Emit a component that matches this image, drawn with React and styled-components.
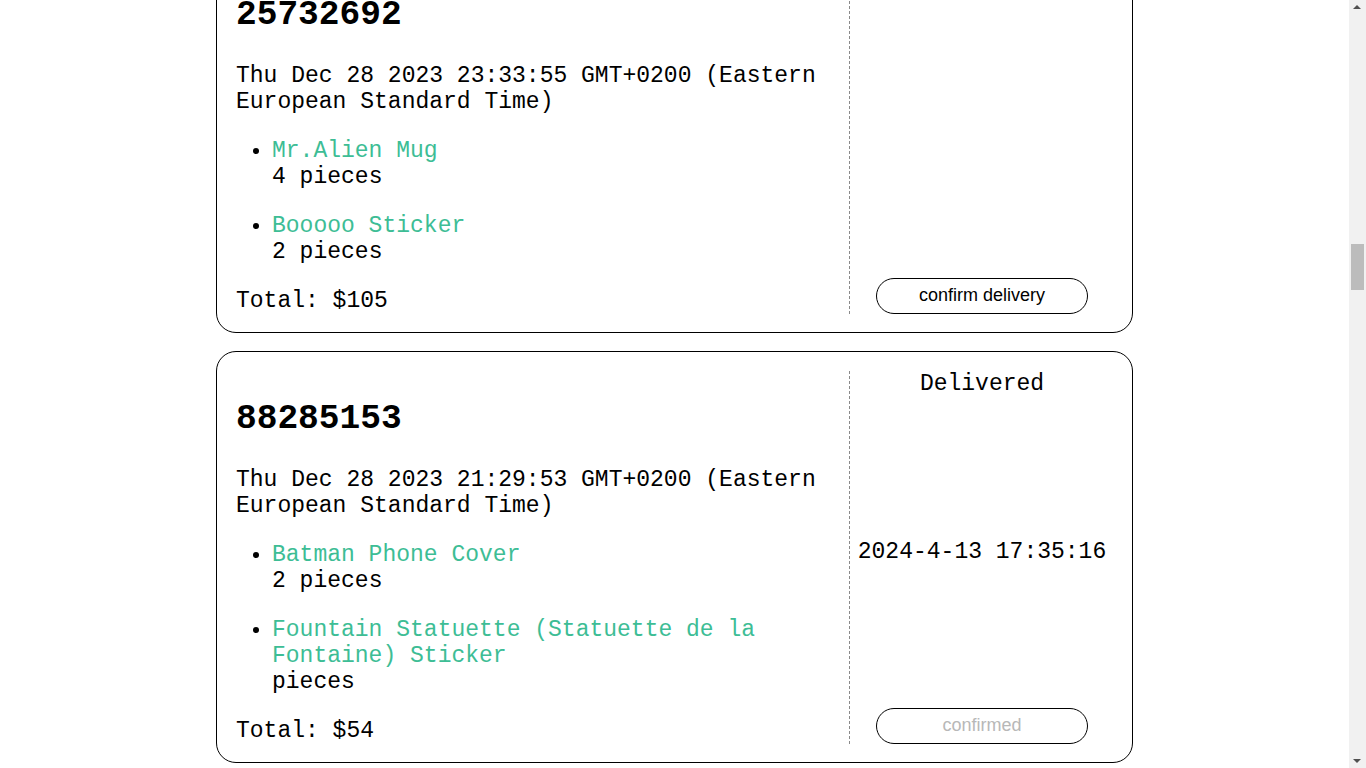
import React, { useLayoutEffect, useRef } from 'react';
import styled, { createGlobalStyle } from 'styled-components';

const GlobalStyle = createGlobalStyle`
  html {
    scrollbar-width: none;
  }
  html::-webkit-scrollbar {
    display: none;
  }
  body {
    margin: 0;
    background: #fff;
    font-family: "Liberation Mono", "Courier New", monospace;
    color: #000;
  }
`;

/* classic scrollbar, as the browser in the screenshot draws it */
const ScrollTrack = styled.div`
  position: fixed;
  top: 0;
  right: 0;
  width: 17px;
  height: 100vh;
  background: #f1f1f1;
`;

const ScrollArrow = styled.div`
  position: absolute;
  left: 4px;
  ${(p) => (p.$down ? 'bottom: 5px;' : 'top: 5px;')}
  width: 0;
  height: 0;
  border-left: 4px solid transparent;
  border-right: 4px solid transparent;
  ${(p) => (p.$down ? 'border-top: 4px solid #505050;' : 'border-bottom: 4px solid #505050;')}
`;

const ScrollThumb = styled.div`
  position: absolute;
  top: 244px;
  left: 2px;
  width: 13px;
  height: 46px;
  background: #bcbcbc;
`;

const OrdersList = styled.main`
  padding: 18px 17px 18px 0;
`;

const Card = styled.section`
  box-sizing: border-box;
  width: 917px;
  margin: 0 auto 18px;
  padding: 19px 18px 18px 19px;
  border: 1px solid #000;
  border-radius: 20px;
  display: flex;
  font-size: 23px;
`;

const Details = styled.div`
  flex: 0 0 613px;
  border-right: 1px dashed #8a8a8a;
`;

const OrderId = styled.h2`
  font-size: 1.5em;
  font-weight: bold;
  margin: 0.83em 0;
`;

const DateLine = styled.div`
  padding-right: 20px;
`;

const Items = styled.ul`
  margin: 1em 0;
  padding-left: 36px;
`;

const Item = styled.li`
  & + & {
    margin-top: 1em;
  }
`;

const ItemName = styled.div`
  color: #3dbd95;
`;

const Total = styled.div`
  margin: 0;
`;

const Status = styled.div`
  flex: 1;
  display: flex;
  flex-direction: column;
  align-items: center;
  justify-content: space-between;
  text-align: center;
`;

const StatusText = styled.div`
  min-height: 26px;
`;

const ConfirmButton = styled.button`
  width: 80%;
  height: 36px;
  border: 1px solid #000;
  border-radius: 18px;
  background: #fff;
  font-family: "Liberation Sans", Arial, sans-serif;
  font-size: 18px;
  color: #000;
  cursor: pointer;

  &:disabled {
    color: #b8b8b8;
    cursor: default;
  }
`;

const products = [
  'Mr.Alien Mug',
  'Booooo Sticker',
  'Batman Phone Cover',
  'Space Cat T-Shirt',
  'Rubber Duck Keychain',
  'Pixel Heart Poster',
];

const filler = (n, delivered) => ({
  id: String(10000000 + ((n * 7919 * 3571) % 89999999)),
  date: `Thu Dec ${28 - (n % 20)} 2023 1${n % 10}:2${n % 6}:4${n % 9} GMT+0200 (Eastern European Standard Time)`,
  items: [
    { name: products[n % products.length], qty: (n % 4) + 1 },
    { name: products[(n + 3) % products.length], qty: (n % 3) + 1 },
  ],
  total: 20 + ((n * 13) % 90),
  delivered,
  deliveredAt: delivered ? `2024-4-${(n % 20) + 1} 1${n % 10}:0${n % 10}:3${n % 10}` : '',
});

const before = Array.from({ length: 9 }, (_, i) => filler(i + 1, false));
const after = Array.from({ length: 18 }, (_, i) => filler(i + 40, true));

const orders = [
  ...before,
  {
    id: '25732692',
    date: 'Thu Dec 28 2023 23:33:55 GMT+0200 (Eastern European Standard Time)',
    items: [
      { name: 'Mr.Alien Mug', qty: 4 },
      { name: 'Booooo Sticker', qty: 2 },
    ],
    total: 105,
    delivered: false,
    anchor: true,
  },
  {
    id: '88285153',
    date: 'Thu Dec 28 2023 21:29:53 GMT+0200 (Eastern European Standard Time)',
    items: [
      { name: 'Batman Phone Cover', qty: 2 },
      { name: 'Fountain Statuette (Statuette de la Fontaine) Sticker', qty: '' },
    ],
    total: 54,
    delivered: true,
    deliveredAt: '2024-4-13 17:35:16',
  },
  ...after,
];

const OrderCard = React.forwardRef(({ order }, ref) => (
  <Card ref={ref}>
    <Details>
      <OrderId>{order.id}</OrderId>
      <DateLine>{order.date}</DateLine>
      <Items>
        {order.items.map((item, i) => (
          <Item key={i}>
            <ItemName>{item.name}</ItemName>
            <div>{item.qty} pieces</div>
          </Item>
        ))}
      </Items>
      <Total>Total: ${order.total}</Total>
    </Details>
    <Status>
      <StatusText>{order.delivered ? 'Delivered' : ''}</StatusText>
      <StatusText>{order.deliveredAt}</StatusText>
      <ConfirmButton disabled={order.delivered}>
        {order.delivered ? 'confirmed' : 'confirm delivery'}
      </ConfirmButton>
    </Status>
  </Card>
));

export default function App() {
  const anchorRef = useRef(null);

  useLayoutEffect(() => {
    const el = anchorRef.current;
    if (el) {
      const top = el.getBoundingClientRect().top + window.scrollY;
      window.scrollTo(0, top + 54);
    }
  }, []);

  return (
    <>
      <GlobalStyle />
      <OrdersList>
        {orders.map((order) => (
          <OrderCard key={order.id} order={order} ref={order.anchor ? anchorRef : null} />
        ))}
      </OrdersList>
      <ScrollTrack>
        <ScrollArrow />
        <ScrollThumb />
        <ScrollArrow $down />
      </ScrollTrack>
    </>
  );
}
